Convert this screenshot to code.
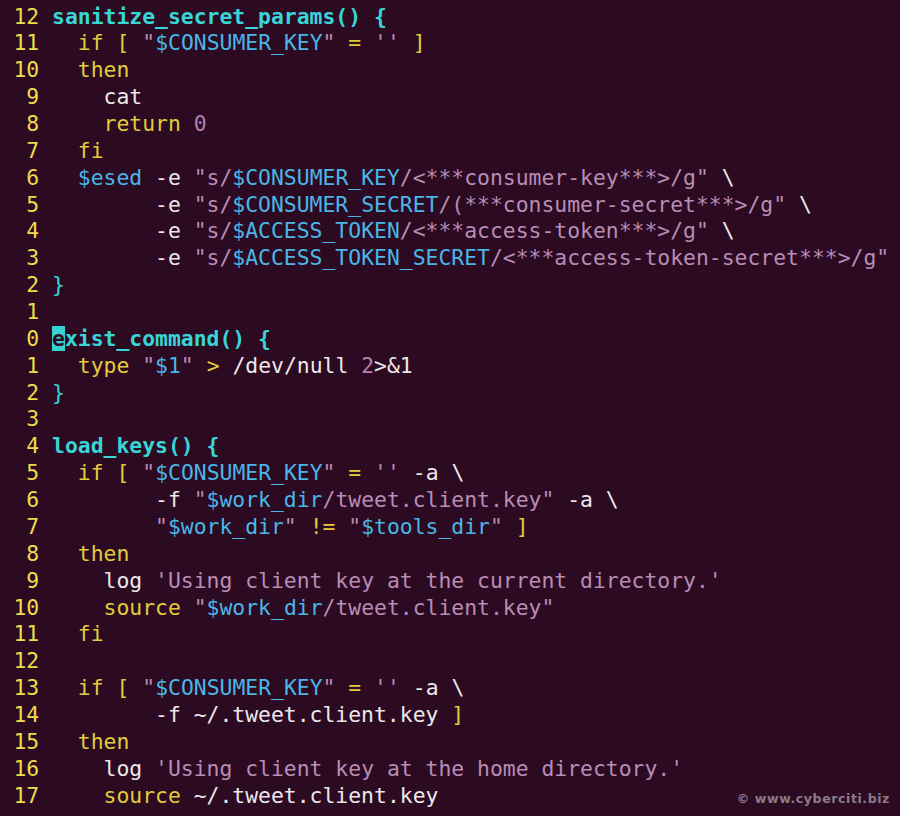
import React from "react";

type Seg = [string, string?];

const C = {
  kw: "text-[#e2cc3c]",
  fn: "text-[#38d6d6] font-bold",
  br: "text-[#38d6d6]",
  str: "text-[#b98cb6]",
  v: "text-[#4ab6e6]",
  w: "text-[#ece8ea]",
  y: "text-[#e2cc3c]",
  num: "text-[#b57db0]",
};

const lines: { n: string; segs: Seg[]; cursor?: boolean }[] = [
  { n: "12", segs: [["sanitize_secret_params() {", C.fn]] },
  { n: "11", segs: [["  "], ["if", C.kw], [" "], ["[", C.y], [" "], ['"', C.str], ["$CONSUMER_KEY", C.v], ['"', C.str], [" "], ["=", C.y], [" "], ["''", C.str], [" "], ["]", C.y]] },
  { n: "10", segs: [["  "], ["then", C.kw]] },
  { n: " 9", segs: [["    "], ["cat", C.w]] },
  { n: " 8", segs: [["    "], ["return", C.kw], [" "], ["0", C.num]] },
  { n: " 7", segs: [["  "], ["fi", C.kw]] },
  { n: " 6", segs: [["  "], ["$esed", C.v], [" -e ", C.w], ['"s/', C.str], ["$CONSUMER_KEY", C.v], ['/<***consumer-key***>/g"', C.str], [" \\", C.w]] },
  { n: " 5", segs: [["        "], ["-e ", C.w], ['"s/', C.str], ["$CONSUMER_SECRET", C.v], ['/(***consumer-secret***>/g"', C.str], [" \\", C.w]] },
  { n: " 4", segs: [["        "], ["-e ", C.w], ['"s/', C.str], ["$ACCESS_TOKEN", C.v], ['/<***access-token***>/g"', C.str], [" \\", C.w]] },
  { n: " 3", segs: [["        "], ["-e ", C.w], ['"s/', C.str], ["$ACCESS_TOKEN_SECRET", C.v], ['/<***access-token-secret***>/g"', C.str]] },
  { n: " 2", segs: [["}", C.br]] },
  { n: " 1", segs: [] },
  { n: " 0", segs: [["xist_command() {", C.fn]], cursor: true },
  { n: " 1", segs: [["  "], ["type", C.kw], [" "], ['"', C.str], ["$1", C.v], ['"', C.str], [" "], [">", C.y], [" /dev/null ", C.w], ["2", C.num], [">&1", C.w]] },
  { n: " 2", segs: [["}", C.br]] },
  { n: " 3", segs: [] },
  { n: " 4", segs: [["load_keys() {", C.fn]] },
  { n: " 5", segs: [["  "], ["if", C.kw], [" "], ["[", C.y], [" "], ['"', C.str], ["$CONSUMER_KEY", C.v], ['"', C.str], [" "], ["=", C.y], [" "], ["''", C.str], [" -a \\", C.w]] },
  { n: " 6", segs: [["        "], ["-f ", C.w], ['"', C.str], ["$work_dir", C.v], ['/tweet.client.key"', C.str], [" -a \\", C.w]] },
  { n: " 7", segs: [["        "], ['"', C.str], ["$work_dir", C.v], ['"', C.str], [" "], ["!=", C.y], [" "], ['"', C.str], ["$tools_dir", C.v], ['"', C.str], [" "], ["]", C.y]] },
  { n: " 8", segs: [["  "], ["then", C.kw]] },
  { n: " 9", segs: [["    "], ["log", C.w], [" "], ["'Using client key at the current directory.'", C.str]] },
  { n: "10", segs: [["    "], ["source", C.kw], [" "], ['"', C.str], ["$work_dir", C.v], ['/tweet.client.key"', C.str]] },
  { n: "11", segs: [["  "], ["fi", C.kw]] },
  { n: "12", segs: [] },
  { n: "13", segs: [["  "], ["if", C.kw], [" "], ["[", C.y], [" "], ['"', C.str], ["$CONSUMER_KEY", C.v], ['"', C.str], [" "], ["=", C.y], [" "], ["''", C.str], [" -a \\", C.w]] },
  { n: "14", segs: [["        "], ["-f ~/.tweet.client.key ", C.w], ["]", C.y]] },
  { n: "15", segs: [["  "], ["then", C.kw]] },
  { n: "16", segs: [["    "], ["log", C.w], [" "], ["'Using client key at the home directory.'", C.str]] },
  { n: "17", segs: [["    "], ["source", C.kw], [" ~/.tweet.client.key", C.w]] },
];

export default function App() {
  return (
    <div className="relative w-[900px] h-[816px] overflow-hidden bg-[#2c0a22]">
      <div
        className="pl-[13.4px] pt-[3.6px] text-[21.4px] leading-[26.86px] whitespace-pre text-[#ece8ea]"
        style={{ fontFamily: '"DejaVu Sans Mono", monospace' }}
      >
        {lines.map((l, i) => (
          <div key={i} className="h-[26.86px]">
            <span className="text-[#eedc48]">{l.n + " "}</span>
            {l.cursor && <span className="bg-[#38d0d0] text-[#2c0a22] font-bold">e</span>}
            {l.segs.map((s, j) => (
              <span key={j} className={s[1] ?? ""}>
                {s[0]}
              </span>
            ))}
          </div>
        ))}
      </div>
      <div
        className="absolute right-[10px] bottom-[7px] text-[12.5px] font-bold tracking-[0.6px] text-[#8c7c8a]"
        style={{ fontFamily: '"DejaVu Sans", sans-serif' }}
      >
        © www.cyberciti.biz
      </div>
    </div>
  );
}
